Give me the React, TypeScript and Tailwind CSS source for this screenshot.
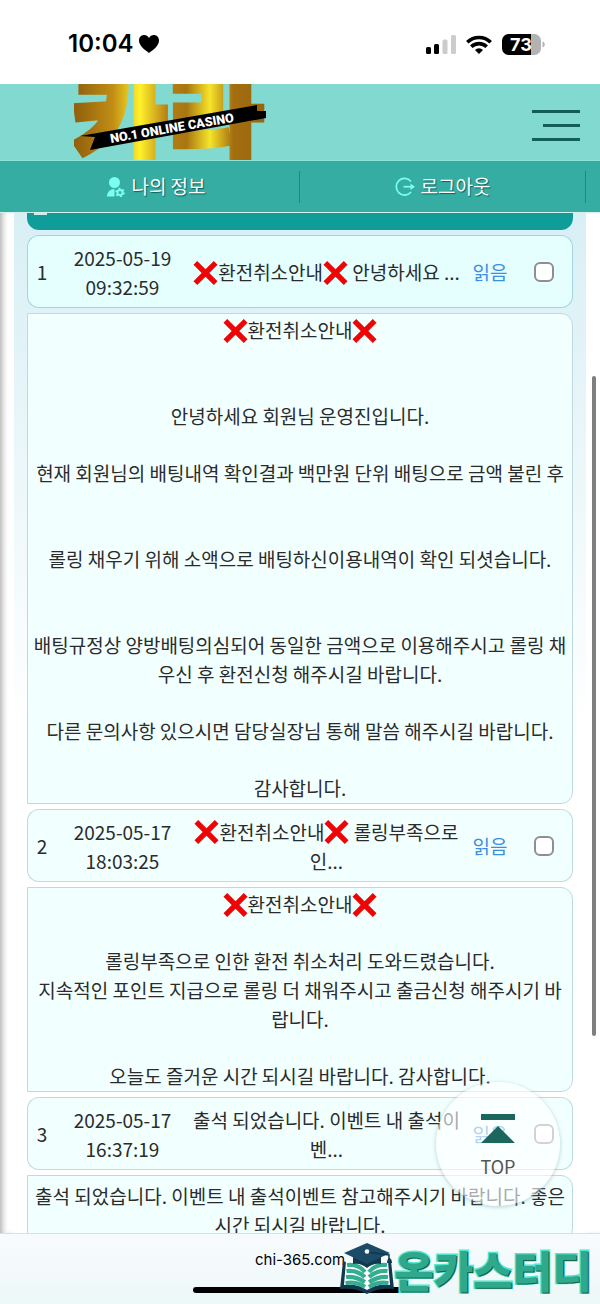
import { Fragment, useState } from "react";

type Message = {
  id: number;
  date: string;
  time: string;
  title: string;
  body: { text: string; gap?: "small" | "line" | "wide" }[];
};

const messages: Message[] = [
  {
    id: 1,
    date: "2025-05-19",
    time: "09:32:59",
    title: "❌환전취소안내❌ 안녕하세요 ...",
    body: [
      { text: "❌환전취소안내❌" },
      { text: "안녕하세요 회원님 운영진입니다.", gap: "wide" },
      { text: "현재 회원님의 배팅내역 확인결과 백만원 단위 배팅으로 금액 불린 후", gap: "line" },
      { text: "롤링 채우기 위해 소액으로 배팅하신이용내역이 확인 되셧습니다.", gap: "wide" },
      { text: "배팅규정상 양방배팅의심되어 동일한 금액으로 이용해주시고 롤링 채우신 후 환전신청 해주시길 바랍니다.", gap: "wide" },
      { text: "다른 문의사항 있으시면 담당실장님 통해 말씀 해주시길 바랍니다.", gap: "line" },
      { text: "감사합니다.", gap: "line" },
    ],
  },
  {
    id: 2,
    date: "2025-05-17",
    time: "18:03:25",
    title: "❌환전취소안내❌ 롤링부족으로\n인...",
    body: [
      { text: "❌환전취소안내❌" },
      { text: "롤링부족으로 인한 환전 취소처리 도와드렸습니다.", gap: "line" },
      { text: "지속적인 포인트 지급으로 롤링 더 채워주시고 출금신청 해주시기 바랍니다." },
      { text: "오늘도 즐거운 시간 되시길 바랍니다. 감사합니다.", gap: "line" },
    ],
  },
  {
    id: 3,
    date: "2025-05-17",
    time: "16:37:19",
    title: "출석 되었습니다. 이벤트 내 출석이\n벤...",
    body: [
      { text: "출석 되었습니다. 이벤트 내 출석이벤트 참고해주시기 바랍니다. 좋은 시간 되시길 바랍니다.", gap: "small" },
    ],
  },
];

const gaps = { small: "mt-1", line: "mt-7", wide: "mt-[57px]" };

function CrossMark() {
  return (
    <svg viewBox="0 0 25 24" className="-mt-1 inline-block h-6 w-[25px]" role="img" aria-label="❌">
      <path
        d="M4.200 0 12.500 8.200 20.800 0 24.500 3.700 16.300 12l8.200 8.300-3.700 3.700-8.300-8.200L4.200 24 .5 20.300 8.700 12 .5 3.700z"
        fill="#ee0404"
      />
    </svg>
  );
}

function RichText({ text }: { text: string }) {
  return (
    <>
      {text.split(/(❌)/).map((part, i) => (part === "❌" ? <CrossMark key={i} /> : <Fragment key={i}>{part}</Fragment>))}
    </>
  );
}

function StatusBar() {
  return (
    <div className="flex h-[84px] shrink-0 items-center justify-between bg-white pt-1 pr-[55px] pl-[68px] text-black">
      <div className="flex items-center gap-1.5">
        <span className="font-['Inter',sans-serif] text-2xl font-semibold">10:04</span>
        <svg viewBox="0 0 20 18" className="h-[18px] w-5">
          <path d="M10 18C6 15 0 11 0 5.500 0 2.200 2.300 0 5.200 0 7.300 0 9 1.100 10 3c1-1.900 2.700-3 4.800-3C17.700 0 20 2.200 20 5.500 20 11 14 15 10 18z" />
        </svg>
      </div>
      <div className="flex items-center gap-2.5">
        <svg viewBox="0 0 30 19" className="h-[19px] w-[30px]">
          <rect x="0" y="12" width="5" height="7" rx="1.500" />
          <rect x="8" y="9" width="5" height="10" rx="1.500" />
          <rect x="16.500" y="4.500" width="5" height="14.500" rx="1.500" fill="#ccc" />
          <rect x="25" y="0" width="5" height="19" rx="1.500" fill="#ccc" />
        </svg>
        <svg viewBox="0 0 26 19" className="h-[19px] w-[26px]" fill="none" stroke="#000" strokeWidth="3.600">
          <path d="M1.300 7.300a16.600 16.600 0 0 1 23.400 0" />
          <path d="M5.300 11.800a10.900 10.900 0 0 1 15.400 0" />
          <path d="M13 19 9 15a5.700 5.700 0 0 1 8 0z" fill="#000" stroke="none" />
        </svg>
        <svg viewBox="0 0 43 21" className="h-[21px] w-[43px]">
          <path d="M29 0h3.500A6.500 6.500 0 0 1 39 6.500v8a6.500 6.500 0 0 1-6.500 6.500H29z" fill="#b3b3b3" />
          <path d="M6.500 0H29v21H6.500A6.500 6.500 0 0 1 0 14.500v-8A6.500 6.500 0 0 1 6.500 0z" />
          <path d="M40.500 7.500c3 1.200 3 4.800 0 6z" fill="#b3b3b3" />
          <text x="8" y="17" fill="#fff" fontSize="18" fontWeight="700" fontFamily="Inter, sans-serif">73</text>
        </svg>
      </div>
    </div>
  );
}

function Logo() {
  return (
    <svg viewBox="0 0 194 76" className="h-[76px] w-[194px]" role="img" aria-label="카라 NO.1 ONLINE CASINO">
      <defs>
        <linearGradient id="gold" gradientUnits="userSpaceOnUse" x1="0" y1="0" x2="194" y2="0">
          <stop offset="0" stopColor="#8f5f0c" />
          <stop offset=".2" stopColor="#c18d14" />
          <stop offset=".34" stopColor="#fff12c" />
          <stop offset=".48" stopColor="#b77f14" />
          <stop offset=".58" stopColor="#a87611" />
          <stop offset=".7" stopColor="#f6e42a" />
          <stop offset=".82" stopColor="#a46e10" />
          <stop offset="1" stopColor="#96650d" />
        </linearGradient>
      </defs>
      <text
        x="-2"
        y="75"
        fill="url(#gold)"
        stroke="url(#gold)"
        strokeWidth="5"
        fontSize="104"
        fontWeight="900"
        fontFamily="'Noto Sans CJK KR', sans-serif"
      >
        카라
      </text>
      <path d="M6 52 183 21v6h9v7L16 66l5-13z" />
      <text
        x="37"
        y="59"
        transform="rotate(-9.800 37 59)"
        fill="#fff"
        fontSize="12.700"
        fontWeight="900"
        fontFamily="Roboto, sans-serif"
      >
        NO.1 ONLINE CASINO
      </text>
    </svg>
  );
}

function Header() {
  return (
    <header className="shrink-0">
      <div className="flex h-[77px] items-start justify-between overflow-hidden border-b border-[#8fe3da] bg-[#82d9d0] pr-5 pl-[74px]">
        <a href="#home">
          <Logo />
        </a>
        <button type="button" aria-label="메뉴" className="mt-[26px] flex w-12 flex-col items-end gap-[11px]">
          <span className="h-[3px] w-full bg-[#135f58]" />
          <span className="h-[3px] w-[37px] bg-[#135f58]" />
          <span className="h-[3px] w-full bg-[#135f58]" />
        </button>
      </div>
      <nav className="flex h-[52px] items-center border-b border-[#d5efec] bg-[#35ada2] px-[14px] text-[19px] text-white [text-shadow:1px_1px_1px_#0b5f58]">
        <a href="#profile" className="flex h-8 flex-1 items-center justify-center gap-1.5 border-r border-[#1c8a80]">
          <svg viewBox="0 0 18 20" className="h-5 w-[18px]" fill="#7cfff0">
            <circle cx="7.500" cy="5.500" r="5.500" />
            <path d="M0 19.500C0 15 3 12 7.500 12v7.500z" />
            <circle cx="13" cy="15.500" r="2.500" fill="none" stroke="#7cfff0" strokeWidth="2" />
            <circle cx="13" cy="15.500" r="4" fill="none" stroke="#7cfff0" strokeWidth="1.600" strokeDasharray="2.100 2.090" />
          </svg>
          나의 정보
        </a>
        <a href="#logout" className="flex h-8 flex-1 items-center justify-center gap-1.5 border-r border-[#1c8a80]">
          <svg viewBox="0 0 20 20" className="size-5" fill="none" stroke="#7cfff0" strokeWidth="1.700">
            <path d="M16 4.500a8.300 8.300 0 1 0 0 10.500" />
            <path d="M8.500 9.700H17" />
            <path d="M15.500 6.500 20 9.700l-4.500 3.200z" fill="#7cfff0" stroke="none" />
          </svg>
          로그아웃
        </a>
      </nav>
    </header>
  );
}

function MessageRows({ message, checked, onCheck }: { message: Message; checked: boolean; onCheck: () => void }) {
  const first = message.id === 1;
  const cell = `h-[73px] border-y p-0 ${first ? "border-[#a0d5dc] bg-[#e5ffff]" : "border-[#bddbdf] bg-[#f2ffff]"}`;

  return (
    <>
      <tr>
        <td className={`${cell} rounded-l-xl border-l`}>{message.id}</td>
        <td className={cell}>
          {message.date}
          <br />
          {message.time}
        </td>
        <td className={`${cell} whitespace-pre`}>
          <RichText text={message.title} />
        </td>
        <td className={`${cell} text-[#3d8ee0]`}>읽음</td>
        <td className={`${cell} rounded-r-xl border-r`}>
          <input
            type="checkbox"
            aria-label={`${message.id}번 쪽지 선택`}
            checked={checked}
            onChange={onCheck}
            className="mx-auto block size-5 appearance-none rounded-md border-2 border-[#8e8e93] bg-white checked:bg-[#3d8ee0]"
          />
        </td>
      </tr>
      <tr>
        <td colSpan={5} className="rounded-r-xl border border-[#bddbdf] bg-[#f2ffff] px-[3px] py-px">
          {message.body.map((line, i) => (
            <p key={i} className={line.gap && gaps[line.gap]}>
              <RichText text={line.text} />
            </p>
          ))}
        </td>
      </tr>
    </>
  );
}

function TopButton() {
  return (
    <button
      type="button"
      className="absolute right-10 bottom-[98px] flex size-[124px] flex-col items-center rounded-full bg-white/60 pt-8 text-lg text-[#555] shadow-[0_1px_4px_#7fa5a288]"
    >
      <svg viewBox="0 0 34 30" className="h-[30px] w-[34px]" fill="#1b675e">
        <path d="M0 0h34v6H0zM17 12l17 17H0z" />
      </svg>
      <span className="mt-2">TOP</span>
    </button>
  );
}

function BookLogo() {
  return (
    <svg viewBox="0 0 54 52" className="h-[52px] w-[54px] shrink-0">
      <path d="M3 18 0 46c10-1 19 0 27 5 8-5 17-6 27-5l-3-28-24 8z" fill="#12384f" />
      <path d="M6 18c8-1 15 0 21 4 6-4 13-5 21-4l2 24c-9-1-16 0-23 5-7-5-14-6-23-5z" fill="#fff" />
      <g fill="none" stroke="#35ad91" strokeWidth="4.200">
        <path d="M7 22c8-1 14 2 18 7M6.500 28c8-1 14 2 18.500 6M6 34c8-1 14 2 19 5M5.500 40c8-1 14 0 19.500 4" />
        <path d="M47 22c-8-1-14 2-18 7M47.500 28c-8-1-14 2-18.500 6M48 34c-8-1-14 2-19 5M48.500 40c-8-1-14 0-19.500 4" />
      </g>
      <path d="M13 12v9c6-1 10 1 14 4 4-3 8-5 14-4v-9z" fill="#12384f" />
      <path d="M27 0 4 10l23 11 23-11z" fill="#1b4b66" />
      <path d="m27 9 22 3v6" fill="none" stroke="#12384f" strokeWidth="1.500" />
      <path d="M49 15c2 0 3 3 3 5h-5c0-2 1-5 2-5z" fill="#12384f" />
      <circle cx="27" cy="8.500" r="2.300" fill="#fff" />
    </svg>
  );
}

function BrowserBar() {
  return (
    <footer className="relative flex h-[71px] shrink-0 flex-col items-center border-t border-[#d9dfe2] bg-linear-to-b from-[#f8fbfd] to-[#edf8f8]">
      <span className="mt-4 font-['Inter',sans-serif] text-[15px] leading-5 text-black">chi-365.com</span>
      <span className="mt-[17px] h-1.5 w-[214px] rounded-full bg-black" />
      <div className="absolute top-[9px] right-2 flex items-center">
        <BookLogo />
        <span className="font-['Noto_Sans_CJK_KR',sans-serif] text-[43px] leading-[52px] font-black whitespace-nowrap text-[#2fa88c] [paint-order:stroke_fill] [-webkit-text-stroke:3px_#4fe6d2] [text-shadow:1px_1px_0_#17644a]">
          온카스터디
        </span>
      </div>
    </footer>
  );
}

export default function App() {
  const [checked, setChecked] = useState<number[]>([]);

  const toggle = (id: number) =>
    setChecked((prev) => (prev.includes(id) ? prev.filter((n) => n !== id) : [...prev, id]));

  return (
    <div className="relative flex h-screen w-full flex-col overflow-hidden bg-white font-['Noto_Sans_CJK_KR',sans-serif] text-[#2b2b2b]">
      <StatusBar />
      <Header />
      <main className="relative min-h-0 flex-1 overflow-hidden shadow-[inset_6px_0_6px_-4px_#aaa]">
        <div className="mx-[14px] bg-linear-to-b from-[#d8eff5] to-white to-50% px-[13px]">
          <table className="-mt-[5px] w-full table-fixed border-separate border-spacing-x-0 border-spacing-y-[5px] text-center text-[19px] leading-[29px]">
            <colgroup>
              <col className="w-[29px]" />
              <col className="w-[133px]" />
              <col />
              <col className="w-[52px]" />
              <col className="w-[57px]" />
            </colgroup>
            <thead>
              <tr>
                <th colSpan={5} className="h-[17px] rounded-b-xl bg-[#0e9d99] p-0 align-top">
                  <span className="ml-[7px] block h-0.5 w-[13px] bg-white/80" />
                </th>
              </tr>
            </thead>
            <tbody>
              {messages.map((m) => (
                <MessageRows key={m.id} message={m} checked={checked.includes(m.id)} onCheck={() => toggle(m.id)} />
              ))}
            </tbody>
          </table>
        </div>
        <span className="absolute top-[163px] right-1 h-[660px] w-1 rounded-full bg-[#7f7f7f]" />
      </main>
      <BrowserBar />
      <TopButton />
    </div>
  );
}
